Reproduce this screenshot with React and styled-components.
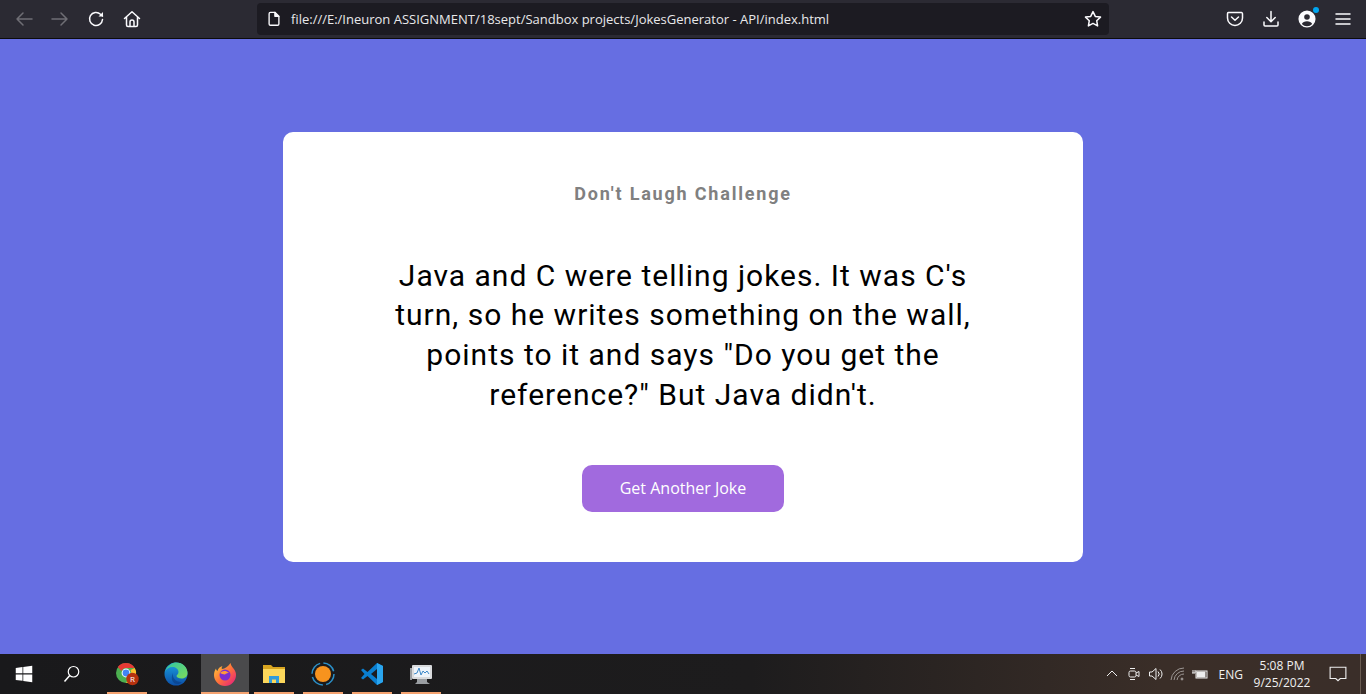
import React from 'react';
import styled, { createGlobalStyle } from 'styled-components';

const GlobalStyle = createGlobalStyle`
  html, body, #root { margin: 0; height: 100%; }
  body { overflow: hidden; font-family: "Open Sans", "Liberation Sans", sans-serif; }
`;

const Screen = styled.div`
  display: flex;
  flex-direction: column;
  width: 1366px;
  height: 694px;
  background: #666eE2;
`;

const Toolbar = styled.header`
  display: flex;
  align-items: center;
  height: 38px;
  flex-shrink: 0;
  padding: 0 14px 0 15px;
  background: #2b2a33;
  border-bottom: 1px solid #0c0c0d;
`;

const NavGroup = styled.div`
  display: flex;
  align-items: center;
  gap: 18px;
  width: 242px;
`;

const ToolIcon = styled.svg`
  display: block;
  width: 18px;
  height: 18px;
  fill: none;
  stroke: ${({ $dim }) => ($dim ? '#6f6e75' : '#fbfbfe')};
  stroke-width: 1.5;
  stroke-linecap: round;
  stroke-linejoin: round;
  flex-shrink: 0;
`;

const UrlBar = styled.div`
  display: flex;
  align-items: center;
  width: 852px;
  height: 32px;
  padding: 0 7px 0 9px;
  box-sizing: border-box;
  border-radius: 4px;
  background: #1c1b22;
`;

const UrlText = styled.span`
  flex: 1;
  margin-left: 9px;
  color: #e8e8ea;
  font-size: 13px;
  white-space: nowrap;
`;

const RightTools = styled.div`
  display: flex;
  align-items: center;
  gap: 18px;
  margin-left: auto;
`;

const AccountWrap = styled.div`
  position: relative;
  width: 18px;
  height: 18px;
`;

const AccountDot = styled.span`
  position: absolute;
  top: -3px;
  right: -3px;
  width: 6px;
  height: 6px;
  border-radius: 50%;
  background: #00a6f0;
`;

const Main = styled.main`
  flex: 1;
  display: flex;
  align-items: center;
  justify-content: center;
`;

const Card = styled.section`
  display: flex;
  flex-direction: column;
  align-items: center;
  width: 800px;
  height: 430px;
  padding-top: 50px;
  box-sizing: border-box;
  border-radius: 10px;
  background: #fff;
  font-family: Roboto, "Liberation Sans", sans-serif;
`;

const Heading = styled.h3`
  margin: 0;
  color: #808080;
  font-size: 18px;
  line-height: 24px;
  font-weight: 700;
  letter-spacing: 1.8px;
`;

const Joke = styled.p`
  width: 600px;
  margin: 50px 0 0;
  color: #000;
  font-size: 30px;
  line-height: 39.8px;
  letter-spacing: 1px;
  text-align: center;
`;

const JokeButton = styled.button`
  width: 202px;
  height: 47px;
  margin-top: 50px;
  border: 0;
  border-radius: 10px;
  background: #a16ade;
  color: #fff;
  font-family: "Open Sans", sans-serif;
  font-size: 16px;
`;

const Taskbar = styled.footer`
  display: flex;
  align-items: stretch;
  height: 40px;
  flex-shrink: 0;
  background: linear-gradient(90deg, #19191b 0%, #1d1c1d 55%, #3a2e28 85%, #3a2e29 100%);
`;

const StartButton = styled.div`
  display: flex;
  align-items: center;
  justify-content: center;
  width: 48px;
`;

const SearchButton = styled(StartButton)`
  width: 48px;
  margin-right: 7px;
`;

const AppSlot = styled.div`
  position: relative;
  display: flex;
  align-items: center;
  justify-content: center;
  width: 48px;
  margin-right: 1px;
  background: ${({ $active }) => ($active ? '#4a4a4c' : 'transparent')};

  &::after {
    content: '';
    display: ${({ $open }) => ($open ? 'block' : 'none')};
    position: absolute;
    left: ${({ $active }) => ($active ? '0' : '4px')};
    right: ${({ $active }) => ($active ? '0' : '4px')};
    bottom: 0;
    height: 2px;
    background: #f4a26f;
  }
`;

const AppIcon = styled.svg`
  display: block;
  width: 24px;
  height: 24px;
`;

const Tray = styled.div`
  display: flex;
  align-items: center;
  margin-left: auto;
  color: #f0f0f0;
  font-size: 12px;
`;

const TrayIcon = styled.svg`
  display: block;
  width: 16px;
  height: 16px;
  margin-right: 6px;
  fill: none;
  stroke: #eee;
  stroke-width: 1;
`;

const Lang = styled.span`
  margin: 0 11px 0 5px;
`;

const Clock = styled.div`
  display: flex;
  flex-direction: column;
  align-items: center;
  width: 56px;
  line-height: 17px;
`;

const Notify = styled.div`
  display: flex;
  align-items: center;
  justify-content: center;
  width: 44px;
  margin-left: 6px;
  margin-right: 5px;
  border-right: 1px solid #6a5c52;
  height: 100%;
`;

const App = () => (
  <Screen>
    <GlobalStyle />
    <Toolbar>
      <NavGroup>
        <ToolIcon viewBox="0 0 18 18" $dim><path d="M17 9H2M8 3 2 9l6 6" /></ToolIcon>
        <ToolIcon viewBox="0 0 18 18" $dim><path d="M1 9h15M10 3l6 6-6 6" /></ToolIcon>
        <ToolIcon viewBox="0 0 18 18"><path d="M15.5 9.5a6.5 6.5 0 1 1-2-5.2L15.5 6" /><path d="M16 2v4.5h-4.5" fill="#fbfbfe" stroke="none" /></ToolIcon>
        <ToolIcon viewBox="0 0 18 18"><path d="M1.5 8.5 9 1.8l7.5 6.7M3.5 7v8a1.5 1.5 0 0 0 1.5 1.5h8a1.5 1.5 0 0 0 1.5-1.5V7M7 16.5V12a2 2 0 0 1 4 0v4.5" /></ToolIcon>
      </NavGroup>
      <UrlBar>
        <ToolIcon viewBox="0 0 18 18" style={{ width: 16, height: 16 }}><path d="M3.5 3a1.5 1.5 0 0 1 1.5-1.5h5L14.5 6v8.5A1.5 1.5 0 0 1 13 16H5a1.5 1.5 0 0 1-1.5-1.5z" /><path d="M10 1.5V6h4.5" fill="#fbfbfe" /></ToolIcon>
        <UrlText>file:///E:/Ineuron ASSIGNMENT/18sept/Sandbox projects/JokesGenerator - API/index.html</UrlText>
        <ToolIcon viewBox="0 0 18 18"><path d="m9 1.6 2.3 4.8 5.2.7-3.8 3.6.9 5.2L9 13.4l-4.6 2.5.9-5.2L1.5 7.1l5.2-.7z" /></ToolIcon>
      </UrlBar>
      <RightTools>
        <ToolIcon viewBox="0 0 18 18"><path d="M2.5 2.5h13A1.2 1.2 0 0 1 16.5 3.7V8a7.5 7.5 0 0 1-15 0V3.7a1.2 1.2 0 0 1 1-1.2z" /><path d="m5.5 7 3.5 3.3L12.5 7" /></ToolIcon>
        <ToolIcon viewBox="0 0 18 18"><path d="M9 1.5v10M4.8 7.5 9 11.7l4.2-4.2M2 12v3a1 1 0 0 0 1 1h12a1 1 0 0 0 1-1v-3" /></ToolIcon>
        <AccountWrap>
          <ToolIcon viewBox="0 0 18 18"><circle cx="9" cy="9" r="7.8" fill="#fbfbfe" stroke="#fbfbfe" /><circle cx="9" cy="7" r="2.8" fill="#2b2a33" stroke="none" /><path d="M3.8 14a5.6 4.2 0 0 1 10.4 0 7 7 0 0 1-10.4 0" fill="#2b2a33" stroke="none" /></ToolIcon>
          <AccountDot />
        </AccountWrap>
        <ToolIcon viewBox="0 0 18 18"><path d="M2 4h14M2 9h14M2 14h14" /></ToolIcon>
      </RightTools>
    </Toolbar>

    <Main>
      <Card>
        <Heading>Don't Laugh Challenge</Heading>
        <Joke>Java and C were telling jokes. It was C's turn, so he writes something on the wall, points to it and says "Do you get the reference?" But Java didn't.</Joke>
        <JokeButton>Get Another Joke</JokeButton>
      </Card>
    </Main>

    <Taskbar>
      <StartButton>
        <AppIcon viewBox="0 0 24 24" style={{ width: 18, height: 18 }}><path fill="#fff" d="M1 4l9-1.3V11H1zM11 2.5 23 1v10H11zM1 12.5h9v8.6L1 20zM11 12.5h12V23l-12-1.6z" /></AppIcon>
      </StartButton>
      <SearchButton>
        <AppIcon viewBox="0 0 24 24" style={{ width: 18, height: 18 }}><circle cx="14" cy="9" r="7" fill="none" stroke="#fff" strokeWidth="1.6" /><path d="M9 14 2 22" stroke="#fff" strokeWidth="2" /></AppIcon>
      </SearchButton>
      <AppSlot $open>
        <AppIcon viewBox="0 0 24 24">
          <circle cx="11" cy="11" r="10" fill="#4caf50" />
          <path d="M11 1a10 10 0 0 1 8.7 5H11a5 5 0 0 0-4.6 3L2.8 5A10 10 0 0 1 11 1z" fill="#e53935" />
          <path d="M19.7 6A10 10 0 0 1 11 21l4.4-7.5A5 5 0 0 0 15.5 8z" fill="#fbc02d" />
          <circle cx="11" cy="11" r="4.4" fill="#fff" /><circle cx="11" cy="11" r="3.4" fill="#4285f4" />
          <circle cx="17.5" cy="17" r="6.2" fill="#b6310f" />
          <text x="17.5" y="20" fontSize="8" fill="#fff" textAnchor="middle" fontFamily="Open Sans">R</text>
        </AppIcon>
      </AppSlot>
      <AppSlot>
        <AppIcon viewBox="0 0 24 24">
          <defs>
            <linearGradient id="edgeA" x1="0" y1="0" x2="1" y2="1"><stop offset="0" stopColor="#2ec5a5" /><stop offset="1" stopColor="#7edc5a" /></linearGradient>
            <linearGradient id="edgeB" x1="0" y1="0" x2="0" y2="1"><stop offset="0" stopColor="#1aa0e0" /><stop offset="1" stopColor="#0c4fa8" /></linearGradient>
          </defs>
          <circle cx="12" cy="12" r="11.5" fill="url(#edgeB)" />
          <path d="M1 10C3 3 9 .5 12 .5c7 0 11.500 5 11.500 10.500 0 4-3 5.500-6 5.500-2.500 0-5-1-5-2.500 0-1 2-1.500 2-4 0-3-3-5-6-5C5 5 2 7 1 10z" fill="url(#edgeA)" />
          <path d="M9 11c-1 5 3 9.500 9 9l-3 2c-6 1-9-5-6-11z" fill="#0a3a80" opacity=".6" />
        </AppIcon>
      </AppSlot>
      <AppSlot $active $open>
        <AppIcon viewBox="0 0 24 24">
          <defs>
            <linearGradient id="foxA" x1="0" y1="0" x2="1" y2="1"><stop offset="0" stopColor="#ffd43b" /><stop offset=".5" stopColor="#ff7139" /><stop offset="1" stopColor="#e31587" /></linearGradient>
          </defs>
          <path d="M17.500 1c.5 2.500 1.500 3.500 3 5.500C22.500 9 23 11 23 13a11 11 0 0 1-22 0c0-3 1-5 2-6.500.2 1.500.8 2 1.500 2.500C5 6.500 7 4.500 9.500 4c-1 1.500-1 2.500-.5 3 3-.5 6-2 8.500-6z" fill="url(#foxA)" />
          <circle cx="12" cy="13" r="5.500" fill="#7b2dd1" />
          <path d="M7 11c2-2.500 6-3 9 0-2 0-3 .5-4 1.500-2-.5-3.500-.5-5-1.500z" fill="#ff9a3c" />
        </AppIcon>
      </AppSlot>
      <AppSlot $open>
        <AppIcon viewBox="0 0 24 24">
          <path d="M1 3h8l2 2h12v3H1z" fill="#d8a520" />
          <path d="M1 7h22v14H1z" fill="#fbd75b" />
          <path d="M7 14h10v7h-3v-3.500h-4V21H7z" fill="#2f9bdc" />
        </AppIcon>
      </AppSlot>
      <AppSlot $open>
        <AppIcon viewBox="0 0 24 24">
          <circle cx="12" cy="12" r="8" fill="#f7931e" />
          <circle cx="12" cy="12" r="11" fill="none" stroke="#2b8fc7" strokeWidth="1.500" strokeDasharray="14 3.300" />
        </AppIcon>
      </AppSlot>
      <AppSlot $open>
        <AppIcon viewBox="0 0 24 24">
          <path d="M17 1 7.500 10 3 6.500 1 8l3.500 4L1 16l2 1.500L7.500 14l9.500 9 6-3V4z" fill="#0a7fd0" />
          <path d="M17 1l6 3v16l-6 3z" fill="#2aa5ee" />
          <path d="M17 7v10l-6-5z" fill="#1c1c1f" />
        </AppIcon>
      </AppSlot>
      <AppSlot $open>
        <AppIcon viewBox="0 0 24 24">
          <rect x="3" y="3" width="20" height="14" rx="1" fill="#d8dadc" />
          <rect x="5" y="5" width="16" height="10" fill="#eef4fa" />
          <path d="M5 12l3-1 2-5 2 7 2-4 2 2 2-2 2 3" stroke="#3c88c8" strokeWidth="1" fill="none" />
          <path d="M1 6v12h2V6zM8 17h10v3l3 2H6l2-2z" fill="#9a9ea2" />
        </AppIcon>
      </AppSlot>
      <Tray>
        <TrayIcon viewBox="0 0 16 16"><path d="m3 10 5-5 5 5" /></TrayIcon>
        <TrayIcon viewBox="0 0 16 16"><rect x="3" y="5" width="7" height="6" rx="1.500" /><path d="m10 7 3-1.500v5L10 9M4 2.500h5M4 13.500h5" /></TrayIcon>
        <TrayIcon viewBox="0 0 16 16"><path d="M1.500 6H4l4-3.500v11L4 10H1.500zM10 5.500a3.500 3.500 0 0 1 0 5M12 3.500a6 6 0 0 1 0 9" /></TrayIcon>
        <TrayIcon viewBox="0 0 16 16" style={{ opacity: 0.55 }}><path d="M1 14A13 13 0 0 1 14 2M4 14a10 10 0 0 1 10-9M7 14a7 7 0 0 1 7-6" /><circle cx="12" cy="13" r="1" fill="#eee" /></TrayIcon>
        <TrayIcon viewBox="0 0 16 16" style={{ width: 16 }}><rect x="4" y="5" width="11" height="7" /><rect x="5" y="6" width="8" height="5" fill="#eee" /><path d="M0 7h3M1 4v3M3 4v3" /></TrayIcon>
        <Lang>ENG</Lang>
        <Clock>
          <span>5:08 PM</span>
          <span>9/25/2022</span>
        </Clock>
        <Notify>
          <TrayIcon viewBox="0 0 16 16" style={{ margin: 0, width: 18, height: 18 }}><path d="M1 2h14v10h-5l-2 2-2-2H1z" /></TrayIcon>
        </Notify>
      </Tray>
    </Taskbar>
  </Screen>
);

export default App;
